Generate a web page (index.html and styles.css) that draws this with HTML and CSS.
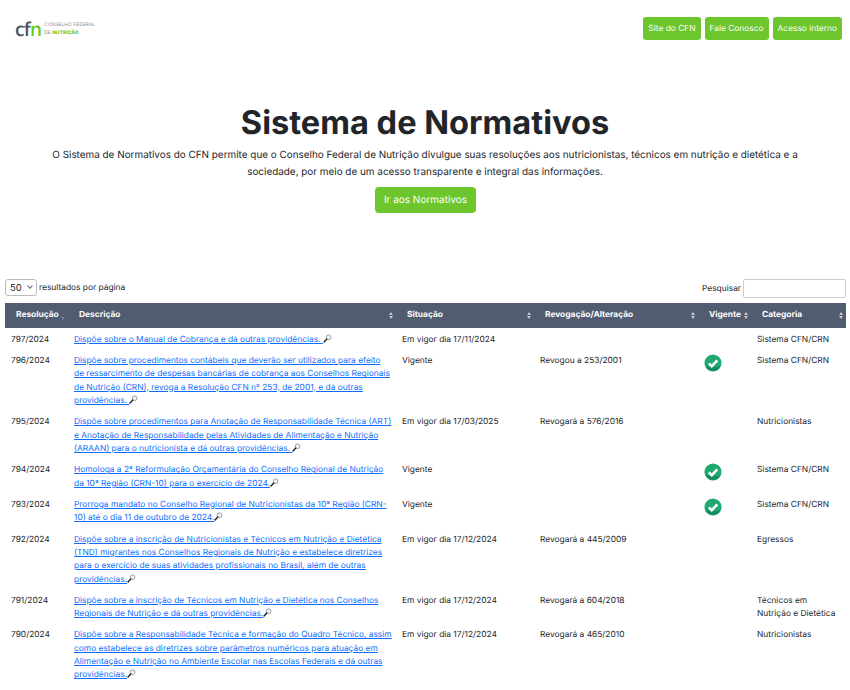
FILE: index.html
```html
<!DOCTYPE html>
<html lang="pt-BR">

<head>
  <meta charset="utf-8">
  <title>Sistema de Normativos</title>
  <link rel="stylesheet" href="styles.css">
</head>

<body>
  <svg class="sprites" width="0" height="0">
    <symbol id="lupa" viewBox="0 0 12 12">
      <circle cx="7.4" cy="4.4" r="3.2" fill="#eef3f7" stroke="#8a8f94" stroke-width="1.1"/>
      <path d="M5 6.8 1.4 10.6" stroke="#222" stroke-width="1.9" stroke-linecap="round"/>
    </symbol>
    <symbol id="check" viewBox="0 0 20 20">
      <circle cx="10" cy="10" r="9.5" fill="#1fa971"/>
      <path d="M1.6 13.5A9.5 9.5 0 0 0 18.4 13.5L10 15Z" fill="#178a5c"/>
      <path d="M5.4 10.4 8.6 13.6 14.8 7.2" fill="none" stroke="#fff" stroke-width="2.8"/>
    </symbol>
  </svg>

  <div class="header">
    <a class="logo" href="#">
      <span class="logo-mark">cf<span class="logo-green">n</span></span>
      <span class="logo-text">CONSELHO FEDERAL<br>DE <b>NUTRIÇÃO</b></span>
    </a>
    <div class="header-links">
      <a class="btn" href="#">Site do CFN</a>
      <a class="btn" href="#">Fale Conosco</a>
      <a class="btn" href="#">Acesso interno</a>
    </div>
  </div>

  <div class="hero">
    <h1>Sistema de Normativos</h1>
    <p>O Sistema de Normativos do CFN permite que o Conselho Federal de Nutrição divulgue suas resoluções aos nutricionistas, técnicos em nutrição e dietética e a sociedade, por meio de um acesso transparente e integral das informações.</p>
    <a class="btn btn-lg" href="#">Ir aos Normativos</a>
  </div>

  <div class="table-tools">
    <label class="per-page">
      <span class="select-box">
        <select>
          <option>50</option>
        </select>
      </span>
      resultados por página
    </label>
    <label class="search">Pesquisar <input type="search"></label>
  </div>

  <table class="normas">
    <colgroup>
      <col class="c-res"><col class="c-desc"><col class="c-sit"><col class="c-rev"><col class="c-vig"><col class="c-cat">
    </colgroup>
    <thead>
      <tr>
        <th class="sorted">Resolução</th>
        <th>Descrição</th>
        <th>Situação</th>
        <th>Revogação/Alteração</th>
        <th>Vigente</th>
        <th>Categoria</th>
      </tr>
    </thead>
    <tbody>
      <tr>
        <td>797/2024</td>
        <td><a href="#">Dispõe sobre o Manual de Cobrança e dá outras providências. <svg class="lupa"><use href="#lupa"/></svg></a></td>
        <td>Em vigor dia 17/11/2024</td>
        <td></td>
        <td></td>
        <td>Sistema CFN/CRN</td>
      </tr>
      <tr>
        <td>796/2024</td>
        <td><a href="#">Dispõe sobre procedimentos contábeis que deverão ser utilizados para efeito de ressarcimento de despesas bancárias de cobrança aos Conselhos Regionais de Nutrição (CRN), revoga a Resolução CFN nº 253, de 2001, e dá outras providências. <svg class="lupa"><use href="#lupa"/></svg></a></td>
        <td>Vigente</td>
        <td>Revogou a 253/2001</td>
        <td><svg class="check"><use href="#check"/></svg></td>
        <td>Sistema CFN/CRN</td>
      </tr>
      <tr>
        <td>795/2024</td>
        <td><a href="#">Dispõe sobre procedimentos para Anotação de Responsabilidade Técnica (ART) e Anotação de Responsabilidade pelas Atividades de Alimentação e Nutrição (ARAAN) para o nutricionista e dá outras providências. <svg class="lupa"><use href="#lupa"/></svg></a></td>
        <td>Em vigor dia 17/03/2025</td>
        <td>Revogará a 576/2016</td>
        <td></td>
        <td>Nutricionistas</td>
      </tr>
      <tr>
        <td>794/2024</td>
        <td><a href="#">Homologa a 2ª Reformulação Orçamentária do Conselho Regional de Nutrição da 10ª Região (CRN-10) para o exercício de 2024.<svg class="lupa"><use href="#lupa"/></svg></a></td>
        <td>Vigente</td>
        <td></td>
        <td><svg class="check"><use href="#check"/></svg></td>
        <td>Sistema CFN/CRN</td>
      </tr>
      <tr>
        <td>793/2024</td>
        <td><a href="#">Prorroga mandato no Conselho Regional de Nutricionistas da 10ª Região (CRN-10) até o dia 11 de outubro de 2024.<svg class="lupa"><use href="#lupa"/></svg></a></td>
        <td>Vigente</td>
        <td></td>
        <td><svg class="check"><use href="#check"/></svg></td>
        <td>Sistema CFN/CRN</td>
      </tr>
      <tr>
        <td>792/2024</td>
        <td><a href="#">Dispõe sobre a inscrição de Nutricionistas e Técnicos em Nutrição e Dietética (TND) migrantes nos Conselhos Regionais de Nutrição e estabelece diretrizes para o exercício de suas atividades profissionais no Brasil, além de outras providências.<svg class="lupa"><use href="#lupa"/></svg></a></td>
        <td>Em vigor dia 17/12/2024</td>
        <td>Revogará a 445/2009</td>
        <td></td>
        <td>Egressos</td>
      </tr>
      <tr>
        <td>791/2024</td>
        <td><a href="#">Dispõe sobre a inscrição de Técnicos em Nutrição e Dietética nos Conselhos Regionais de Nutrição e dá outras providências.<svg class="lupa"><use href="#lupa"/></svg></a></td>
        <td>Em vigor dia 17/12/2024</td>
        <td>Revogará a 604/2018</td>
        <td></td>
        <td>Técnicos em Nutrição e Dietética</td>
      </tr>
      <tr>
        <td>790/2024</td>
        <td><a href="#">Dispõe sobre a Responsabilidade Técnica e formação do Quadro Técnico, assim como estabelece as diretrizes sobre parâmetros numéricos para atuação em Alimentação e Nutrição no Ambiente Escolar nas Escolas Federais e dá outras providências.<svg class="lupa"><use href="#lupa"/></svg></a></td>
        <td>Em vigor dia 17/12/2024</td>
        <td>Revogará a 465/2010</td>
        <td></td>
        <td>Nutricionistas</td>
      </tr>
    </tbody>
  </table>
</body>

</html>
```

FILE: styles.css
```css
html {
  overflow: hidden;
}

body {
  margin: 0;
  height: 690px;
  overflow: hidden;
  font-family: Inter, "Liberation Sans", sans-serif;
  color: #212529;
  background-color: #ffffff;
  text-rendering: geometricPrecision;
}

.sprites {
  display: block;
  height: 0;
}

.header {
  display: flex;
  align-items: flex-start;
  justify-content: space-between;
  padding: 17px 8px 0 15px;
}

.logo {
  display: flex;
  align-items: center;
  gap: 3px;
  height: 24px;
  text-decoration: none;
}

.logo-mark {
  font-family: "Open Sans", sans-serif;
  font-size: 19px;
  font-weight: 600;
  line-height: 20px;
  letter-spacing: -0.7px;
  color: #4a5568;
}

.logo-green {
  color: #6cc62c;
}

.logo-text {
  font-size: 4.8px;
  line-height: 8px;
  letter-spacing: 0.1px;
  color: #8a8f94;
}

.logo-text b {
  font-weight: 800;
  color: #6cc62c;
}

.header-links {
  display: flex;
  gap: 4px;
}

.btn {
  display: block;
  padding: 1px 5px 0;
  font-size: 8.4px;
  line-height: 22px;
  color: #ffffff;
  text-decoration: none;
  background-color: #6cc62c;
  border-radius: 3px;
}

.hero {
  padding-top: 59px;
  text-align: center;
}

.hero h1 {
  margin: 0;
  font-size: 32.6px;
  font-weight: 700;
  line-height: 44px;
}

.hero p {
  width: 760px;
  margin: 3px auto 6px;
  font-size: 9.92px;
  line-height: 17px;
}

.btn-lg {
  display: inline-block;
  margin-left: 1px;
  padding: 0 9px;
  font-size: 10px;
  line-height: 26px;
  border-radius: 4px;
}

.table-tools {
  display: flex;
  align-items: flex-start;
  justify-content: space-between;
  width: 841px;
  margin: 66px 0 0 5px;
  font-size: 8.4px;
}

.per-page {
  display: flex;
  align-items: center;
  gap: 2px;
  height: 17px;
}

.select-box {
  position: relative;
  display: block;
}

.select-box::after {
  content: "";
  position: absolute;
  top: 5px;
  right: 5px;
  width: 3px;
  height: 3px;
  border-right: 1px solid #666666;
  border-bottom: 1px solid #666666;
  transform: rotate(45deg);
}

.select-box select {
  display: block;
  width: 32px;
  height: 17px;
  padding: 0 0 0 4px;
  font-family: inherit;
  font-size: 9.5px;
  color: #212529;
  appearance: none;
  background-color: #ffffff;
  border: 1px solid #bbbbbb;
  border-radius: 3px;
}

.search {
  display: flex;
  align-items: center;
  gap: 2px;
  height: 19px;
}

.search input {
  width: 103px;
  height: 19px;
  padding: 0;
  box-sizing: border-box;
  border: 1px solid #cccccc;
  border-radius: 2px;
}

.normas {
  width: 841px;
  margin: 5px 0 0 5px;
  table-layout: fixed;
  border-collapse: collapse;
  font-size: 8.4px;
  line-height: 13.33px;
}

.c-res { width: 63px; }
.c-desc { width: 328px; }
.c-sit { width: 138px; }
.c-rev { width: 164px; }
.c-vig { width: 53px; }
.c-cat { width: 95px; }

.normas th {
  position: relative;
  height: 24px;
  padding: 1px 6px 0 11px;
  text-align: left;
  font-weight: 700;
  color: #ffffff;
  background-color: #525c70;
}

/* setas de ordenacao */
.normas th::before,
.normas th::after {
  content: "";
  position: absolute;
  right: 3px;
  border-left: 2px solid transparent;
  border-right: 2px solid transparent;
}

.normas th::before {
  top: 9px;
  border-bottom: 3px solid #c3c7cf;
}

.normas th::after {
  top: 13px;
  border-top: 3px solid #c3c7cf;
}

.normas th.sorted::before {
  display: none;
}

.normas th.sorted::after {
  top: 14px;
  border-top-color: #7c86b8;
}

.normas td {
  padding: 5.7px 6px 2.3px;
  vertical-align: top;
}

.normas td:nth-child(2) {
  padding-right: 4px;
}

.normas a {
  color: #0d6efd;
}

.lupa {
  width: 9px;
  height: 9px;
  vertical-align: -1px;
}

.check {
  display: block;
  width: 18px;
  height: 18px;
  margin-top: -1px;
}
```
